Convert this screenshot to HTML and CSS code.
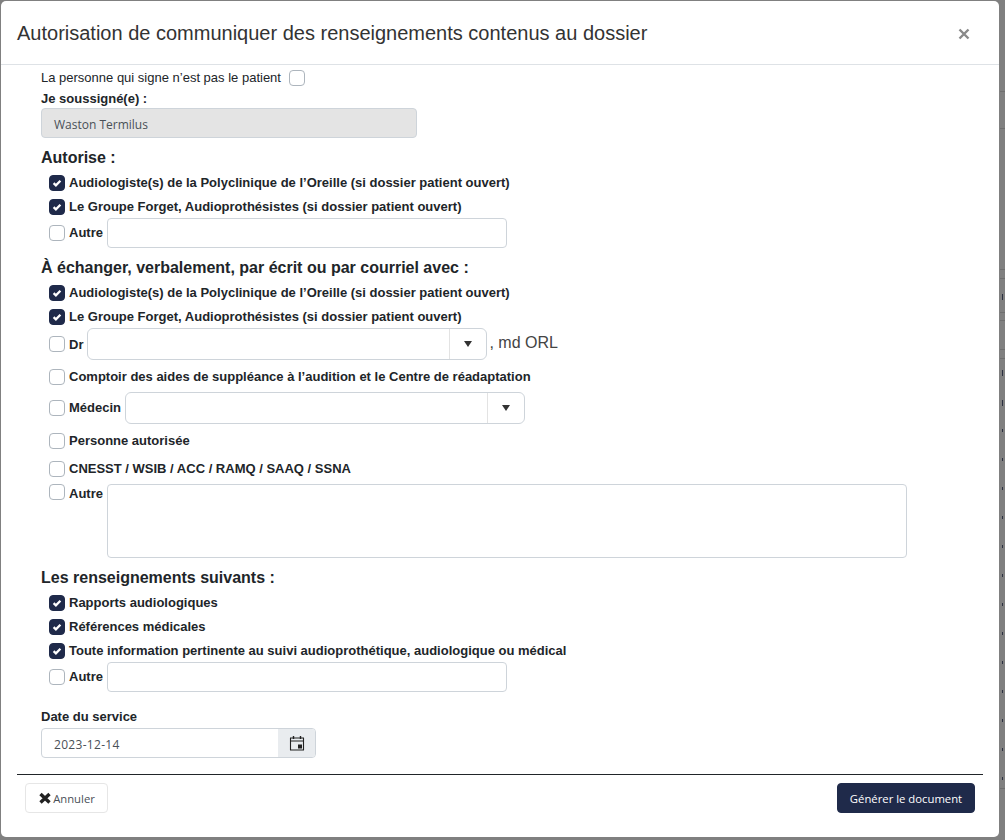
FILE: index.html
```html
<!DOCTYPE html>
<html lang="fr">
<head>
    <meta charset="UTF-8">
    <title>Autorisation de communiquer</title>
    <link rel="stylesheet" href="styles.css">
</head>
<body>
<div class="backPage"></div>
<div class="modal">
    <div class="modalHeader">
        <h5>Autorisation de communiquer des renseignements contenus au dossier</h5>
        <svg class="closeIcon" width="12" height="12" viewBox="0 0 12 12"><path d="M1.5 1.5l9 9M10.5 1.5l-9 9" stroke="#8a8a8a" stroke-width="2.4" fill="none"/></svg>
    </div>
    <div class="modalBody">
        <div class="signRow">
            <span>La personne qui signe n’est pas le patient</span>
            <span class="box"></span>
        </div>
        <label class="fieldLabel">Je soussigné(e) :</label>
        <div class="input readonly wide">Waston Termilus</div>

        <h6>Autorise :</h6>
        <div class="check row24"><span class="box on"><svg width="12" height="12" viewBox="0 0 12 12"><path d="M2.6 6.200l2.300 2.200 4.500-4.600" stroke="#fff" stroke-width="2.300" fill="none"/></svg></span>Audiologiste(s) de la Polyclinique de l’Oreille (si dossier patient ouvert)</div>
        <div class="check row24"><span class="box on"><svg width="12" height="12" viewBox="0 0 12 12"><path d="M2.6 6.200l2.300 2.200 4.500-4.600" stroke="#fff" stroke-width="2.300" fill="none"/></svg></span>Le Groupe Forget, Audioprothésistes (si dossier patient ouvert)</div>
        <div class="check"><span class="box"></span><span class="raised">Autre</span><div class="input other"></div></div>

        <h6>À échanger, verbalement, par écrit ou par courriel avec :</h6>
        <div class="check row24"><span class="box on"><svg width="12" height="12" viewBox="0 0 12 12"><path d="M2.6 6.200l2.300 2.200 4.500-4.600" stroke="#fff" stroke-width="2.300" fill="none"/></svg></span>Audiologiste(s) de la Polyclinique de l’Oreille (si dossier patient ouvert)</div>
        <div class="check row24"><span class="box on"><svg width="12" height="12" viewBox="0 0 12 12"><path d="M2.6 6.200l2.300 2.200 4.500-4.600" stroke="#fff" stroke-width="2.300" fill="none"/></svg></span>Le Groupe Forget, Audioprothésistes (si dossier patient ouvert)</div>
        <div class="check"><span class="box"></span>Dr<div class="combo"><span class="comboArrow"><i></i></span></div><span class="suffix">, md ORL</span></div>
        <div class="check row32"><span class="box"></span>Comptoir des aides de suppléance à l’audition et le Centre de réadaptation</div>
        <div class="check"><span class="box"></span><span class="raised">Médecin</span><div class="combo"><span class="comboArrow"><i></i></span></div></div>
        <div class="check row32"><span class="box"></span>Personne autorisée</div>
        <div class="check row24"><span class="box"></span>CNESST / WSIB / ACC / RAMQ / SAAQ / SSNA</div>
        <div class="check top"><span class="box"></span>Autre<div class="textarea"></div></div>

        <h6>Les renseignements suivants :</h6>
        <div class="check row24"><span class="box on"><svg width="12" height="12" viewBox="0 0 12 12"><path d="M2.6 6.200l2.300 2.200 4.500-4.600" stroke="#fff" stroke-width="2.300" fill="none"/></svg></span>Rapports audiologiques</div>
        <div class="check row24"><span class="box on"><svg width="12" height="12" viewBox="0 0 12 12"><path d="M2.6 6.200l2.300 2.200 4.500-4.600" stroke="#fff" stroke-width="2.300" fill="none"/></svg></span>Références médicales</div>
        <div class="check row24"><span class="box on"><svg width="12" height="12" viewBox="0 0 12 12"><path d="M2.6 6.200l2.300 2.200 4.500-4.600" stroke="#fff" stroke-width="2.300" fill="none"/></svg></span>Toute information pertinente au suivi audioprothétique, audiologique ou médical</div>
        <div class="check"><span class="box"></span><span class="raised">Autre</span><div class="input other"></div></div>

        <label class="fieldLabel date">Date du service</label>
        <div class="dateGroup">
            <div class="dateValue">2023-12-14</div>
            <div class="dateBtn">
                <svg width="16" height="16" viewBox="0 0 16 16"><path d="M1.500 3h13v12h-13zM1.500 6h13" fill="none" stroke="#222" stroke-width="1.100"/><path d="M4.500 1v3M11.500 1v3" stroke="#222" stroke-width="1.400"/><rect x="9" y="9.500" width="4" height="4" fill="#222"/></svg>
            </div>
        </div>
    </div>
    <div class="modalFooter">
        <button class="btnCancel"><svg width="14" height="14" viewBox="0 0 14 14"><path d="M2.500 3l9 8.500M11.500 3l-9 8.500" stroke="#222" stroke-width="3.400" fill="none"/></svg>Annuler</button>
        <button class="btnMain">Générer le document</button>
    </div>
</div>
</body>
</html>
```

FILE: styles.css
```css
* {
    box-sizing: border-box;
    margin: 0;
    padding: 0;
}
html, body {
    height: 100%;
}
body {
    background: #808080;
    font-family: "Liberation Sans", Arial, sans-serif;
    color: #212529;
    overflow: hidden;
    padding: 1px 6px 3px 1px;
}
/* table of the page behind the modal, only its last pixels show */
.backPage {
    position: absolute;
    top: 0;
    right: 0;
    width: 5px;
    height: 840px;
    background:
        linear-gradient(#6f6f6f, #6f6f6f) 0 91px / 100% 1px no-repeat,
        linear-gradient(#6f6f6f, #6f6f6f) 0 128px / 100% 1px no-repeat,
        linear-gradient(#6f6f6f, #6f6f6f) 0 269px / 100% 1px no-repeat,
        linear-gradient(#6f6f6f, #6f6f6f) 0 278px / 100% 1px no-repeat,
        linear-gradient(#6f6f6f, #6f6f6f) 0 312px / 100% 1px no-repeat,
        linear-gradient(#6f6f6f, #6f6f6f) 0 320px / 100% 1px no-repeat,
        linear-gradient(#6f6f6f, #6f6f6f) 0 349px / 100% 1px no-repeat,
        linear-gradient(#6f6f6f, #6f6f6f) 0 358px / 100% 1px no-repeat,
        linear-gradient(#6f6f6f, #6f6f6f) 0 788px / 100% 1px no-repeat,
        linear-gradient(#2b3040, #2b3040) 2px 294px / 1px 6px no-repeat,
        linear-gradient(#2b3040, #2b3040) 2px 370px / 1px 6px no-repeat,
        linear-gradient(#2b3040, #2b3040) 2px 400px / 1px 6px no-repeat,
        repeating-linear-gradient(transparent 0 26px, #2b3040 26px 29px) 2px 403px / 1px 380px no-repeat;
}
.modal {
    position: relative;
    height: 836px;
    background: #fff;
    border-radius: 5px;
}
.modalHeader {
    height: 64px;
    border-bottom: 1px solid #dee2e6;
    padding: 2px 29px 0 16px;
    display: flex;
    justify-content: space-between;
    align-items: center;
}
.modalHeader h5 {
    font-size: 20px;
    font-weight: 400;
    color: #333;
}
.modalBody {
    padding: 3px 0 0 40px;
    height: 709px;
}
.signRow {
    display: flex;
    align-items: center;
    height: 19px;
    font-size: 13px;
    gap: 8px;
}
.fieldLabel {
    display: block;
    font-size: 13px;
    font-weight: 700;
    height: 21px;
    line-height: 24px;
}
.fieldLabel.date {
    margin-top: 13px;
    height: 23px;
}
.input {
    height: 30px;
    border: 1px solid #ced4da;
    border-radius: 4px;
    background: #fff;
    font-family: "Open Sans", sans-serif;
    font-size: 12px;
    line-height: 32px;
    padding-left: 12px;
    color: #495057;
}
.readonly {
    background: #e4e4e4;
}
.wide {
    width: 376px;
}
h6 {
    font-size: 16px;
    font-weight: 700;
    height: 19px;
    line-height: 19px;
    margin: 10px 0 3px;
}
.check {
    display: flex;
    align-items: center;
    font-size: 13px;
    font-weight: 700;
    padding-left: 8px;
}
.raised {
    margin-bottom: 2px;
}
.row24 {
    height: 24px;
}
.row32 {
    height: 32px;
}
.row24 .box, .row32 .box {
    margin-top: 2px;
}
.check.top {
    align-items: flex-start;
    margin-top: 4px;
    line-height: 20px;
}
.box {
    width: 16px;
    height: 16px;
    border: 1px solid #adb5bd;
    border-radius: 4px;
    background: #fff;
    flex: none;
    display: flex;
    align-items: center;
    justify-content: center;
}
.check .box {
    margin-right: 4px;
}
.box.on {
    background: #1f2a4a;
    border-color: #1f2a4a;
}
.other {
    width: 400px;
    margin-left: 4px;
}
.combo {
    width: 400px;
    height: 32px;
    margin-left: 4px;
    border: 1px solid #ced4da;
    border-radius: 6px;
    display: flex;
    justify-content: flex-end;
}
.comboArrow {
    width: 37px;
    border-left: 1px solid #e3e3e3;
    display: flex;
    align-items: center;
    justify-content: center;
}
.comboArrow i {
    border-style: solid;
    border-width: 6px 4px 0;
    border-color: #333 transparent transparent;
}
.suffix {
    font-size: 16px;
    font-weight: 400;
    margin: 0 0 2px 2px;
    color: #444;
}
.textarea {
    width: 800px;
    height: 74px;
    margin-left: 4px;
    border: 1px solid #ced4da;
    border-radius: 4px;
}
.dateGroup {
    display: flex;
    width: 275px;
    height: 30px;
    border: 1px solid #ced4da;
    border-radius: 4px;
    overflow: hidden;
}
.dateValue {
    flex: 1;
    font-family: "Open Sans", sans-serif;
    font-size: 12px;
    letter-spacing: .3px;
    line-height: 32px;
    padding-left: 12px;
    color: #495057;
}
.dateBtn {
    width: 37px;
    background: #e9ecef;
    display: flex;
    align-items: center;
    justify-content: center;
}
.modalFooter {
    margin: 0 16px;
    border-top: 1px solid #212529;
    padding: 8px 8px 0;
    display: flex;
    justify-content: space-between;
}
button {
    height: 30px;
    border-radius: 4px;
    font-family: "Open Sans", sans-serif;
    font-size: 11.300px;
}
.btnCancel {
    width: 83px;
    background: #fff;
    border: 1px solid #e6e6e6;
    color: #495057;
    display: flex;
    align-items: center;
    justify-content: center;
    gap: 1px;
}
.btnMain {
    width: 138px;
    background: #1f2a4a;
    border: 1px solid #1f2a4a;
    color: #fff;
}
```
